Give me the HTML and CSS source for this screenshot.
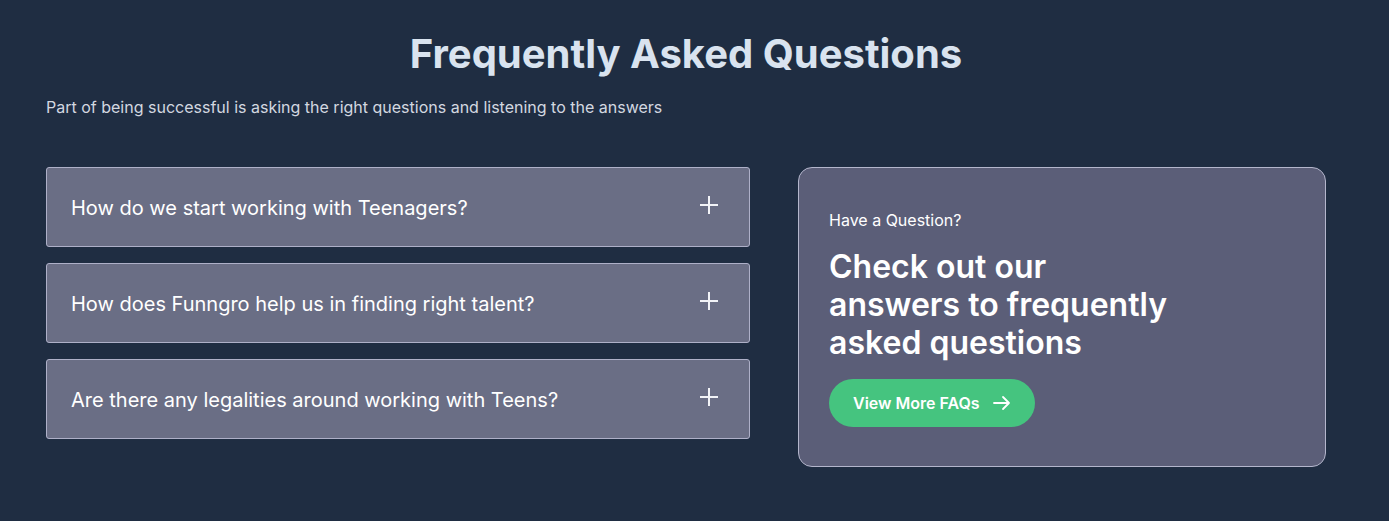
FILE: index.html
```html
<!DOCTYPE html>
<html lang="en">
<head>
<meta charset="utf-8">
<title>FAQ</title>
<link rel="stylesheet" href="styles.css">
</head>
<body>
<section class="faq">
  <h1 class="faq-title">Frequently Asked Questions</h1>
  <p class="faq-sub">Part of being successful is asking the right questions and listening to the answers</p>
  <div class="faq-grid">
    <div class="faq-list">
      <div class="faq-item">
        <span>How do we start working with Teenagers?</span>
        <svg class="plus" width="20" height="20" viewBox="0 0 20 20"><path d="M10 1v18M1 10h18" stroke="currentColor" stroke-width="2" fill="none"/></svg>
      </div>
      <div class="faq-item">
        <span>How does Funngro help us in finding right talent?</span>
        <svg class="plus" width="20" height="20" viewBox="0 0 20 20"><path d="M10 1v18M1 10h18" stroke="currentColor" stroke-width="2" fill="none"/></svg>
      </div>
      <div class="faq-item">
        <span>Are there any legalities around working with Teens?</span>
        <svg class="plus" width="20" height="20" viewBox="0 0 20 20"><path d="M10 1v18M1 10h18" stroke="currentColor" stroke-width="2" fill="none"/></svg>
      </div>
    </div>
    <div class="faq-card">
      <p class="card-kicker">Have a Question?</p>
      <h2 class="card-title">Check out our answers to frequently asked questions</h2>
      <a class="card-btn" href="#">View More FAQs
        <svg width="18" height="16" viewBox="0 0 18 16"><path d="M1 8h15M10 2l6 6-6 6" stroke="currentColor" stroke-width="1.8" fill="none" stroke-linecap="round" stroke-linejoin="round"/></svg>
      </a>
    </div>
  </div>
</section>
</body>
</html>
```
FILE: styles.css
```css
* { box-sizing: border-box; }
html, body { margin: 0; padding: 0; }
body {
  background: #1f2d42;
  font-family: Inter, "Noto Sans", sans-serif;
  color: #e6eaf0;
  height: 521px;
  overflow: hidden;
}
.faq {
  width: 1280px;
  margin-left: 46px;
  padding-top: 29px;
}
.faq-title {
  margin: 0;
  text-align: center;
  font-size: 40px;
  line-height: 50px;
  font-weight: 700;
  color: #d9e3ef;
}
.faq-sub {
  margin: 18px 0 0;
  font-size: 16px;
  line-height: 20px;
  color: #d3d8e0;
}
.faq-grid {
  display: grid;
  grid-template-columns: 704px 528px;
  column-gap: 48px;
  margin-top: 50px;
  align-items: start;
}
.faq-list {
  display: flex;
  flex-direction: column;
  gap: 16px;
}
.faq-item {
  height: 80px;
  background: #6a6e85;
  border: 1px solid #aeb0c8;
  border-radius: 3px;
  display: flex;
  align-items: center;
  justify-content: space-between;
  padding: 0 30px 4px 24px;
  font-size: 20px;
  color: #ffffff;
}
.faq-item span { padding-top: 6px; }
.plus { color: #f2f3f7; }
.faq-card {
  height: 300px;
  background: #5b5e78;
  border: 1px solid #b4b6cc;
  border-radius: 14px;
  padding: 41px 30px 0 30px;
}
.card-kicker {
  margin: 0;
  font-size: 16px;
  line-height: 22px;
  color: #ffffff;
}
.card-title {
  margin: 17px 0 0;
  width: 345px;
  font-size: 32px;
  line-height: 38px;
  font-weight: 600;
  color: #ffffff;
}
.card-btn {
  margin-top: 17px;
  display: inline-flex;
  align-items: center;
  gap: 13px;
  height: 48px;
  padding: 0 24px;
  border-radius: 24px;
  background: #45c47f;
  color: #ffffff;
  font-size: 16px;
  font-weight: 600;
  text-decoration: none;
}
```
